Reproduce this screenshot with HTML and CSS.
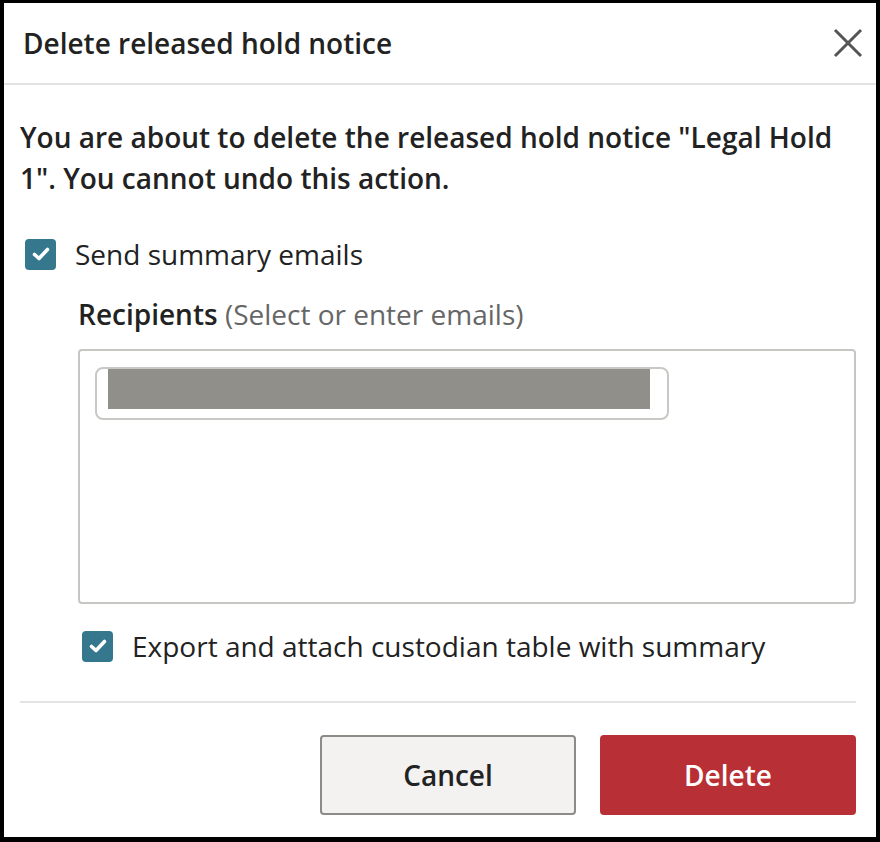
FILE: index.html
```html
<!DOCTYPE html>
<html lang="en">

<head>
    <meta charset="utf-8" />
    <meta name="viewport" content="width=device-width, initial-scale=1.0" />
    <title>Delete released hold notice</title>
    <link rel="stylesheet" href="styles.css">
</head>

<body>
    <div class="dialog">
        <div class="dialog-header">
            <h1 class="dialog-title">Delete released hold notice</h1>
            <button class="close-btn" aria-label="Close">
                <svg width="30" height="30" viewBox="0 0 30 30">
                    <path d="M2 2 L28 28 M28 2 L2 28" stroke="#555" stroke-width="3" fill="none" />
                </svg>
            </button>
        </div>

        <div class="dialog-body">
            <p class="warning">You are about to delete the released hold notice "Legal Hold 1". You cannot undo this action.</p>

            <label class="check-row">
                <span class="checkbox">
                    <svg width="20" height="20" viewBox="0 0 20 20">
                        <path d="M3.5 10.5 L8 14.5 L16.5 5.5" stroke="#fff" stroke-width="3.6" fill="none" stroke-linecap="round" stroke-linejoin="round" />
                    </svg>
                </span>
                Send summary emails
            </label>

            <div class="recipients">
                <div class="field-label"><b>Recipients</b> <span class="hint">(Select or enter emails)</span></div>
                <div class="email-box">
                    <div class="chip"><span class="redacted"></span></div>
                </div>

                <label class="check-row">
                    <span class="checkbox">
                        <svg width="20" height="20" viewBox="0 0 20 20">
                            <path d="M3.5 10.5 L8 14.5 L16.5 5.5" stroke="#fff" stroke-width="3.6" fill="none" stroke-linecap="round" stroke-linejoin="round" />
                        </svg>
                    </span>
                    Export and attach custodian table with summary
                </label>
            </div>
        </div>

        <div class="dialog-footer">
            <button class="btn btn-cancel">Cancel</button>
            <button class="btn btn-delete">Delete</button>
        </div>
    </div>
</body>

</html>
```

FILE: styles.css
```css
html {
    font-family: "Open Sans", "Noto Sans", sans-serif;
    color: #222;
}

body {
    margin: 0;
    background: #000;
    padding: 3px 4px 5px 4px;
    height: 842px;
    box-sizing: border-box;
}

.dialog {
    background: #fff;
    height: 100%;
    display: flex;
    flex-direction: column;
}

.dialog-header {
    display: flex;
    align-items: center;
    justify-content: space-between;
    height: 80px;
    padding: 0 13px 0 19px;
    border-bottom: 2px solid #e3e3e3;
}

.dialog-title {
    margin: 0;
    font-size: 28px;
    font-weight: 600;
    color: #222;
}

.close-btn {
    border: 0;
    background: none;
    padding: 0;
    width: 30px;
    height: 30px;
    cursor: pointer;
}

.dialog-body {
    padding: 0 20px 0 16px;
}

.warning {
    margin: 32px 0 0 0;
    font-size: 28px;
    line-height: 41px;
    font-weight: 600;
    color: #222;
}

.check-row {
    display: flex;
    align-items: center;
    gap: 19px;
    font-size: 28px;
    line-height: 38px;
    color: #222;
    margin-top: 36px;
    padding-left: 5px;
}

.checkbox {
    width: 31px;
    height: 31px;
    border-radius: 4px;
    background: #35788d;
    display: flex;
    align-items: center;
    justify-content: center;
    flex-shrink: 0;
}

.recipients {
    padding-left: 58px;
}

.recipients .check-row {
    margin-top: 23px;
    padding-left: 4px;
}

.field-label {
    font-size: 28px;
    line-height: 38px;
    margin-top: 22px;
}

.field-label b {
    font-weight: 600;
}

.hint {
    color: #666;
}

.email-box {
    margin-top: 16px;
    height: 255px;
    box-sizing: border-box;
    border: 2px solid #c6c6c2;
    border-radius: 4px;
    padding: 16px 15px;
}

.chip {
    width: 574px;
    height: 53px;
    border: 2px solid #c8c8c4;
    border-radius: 8px;
    padding: 0 17px 0 11px;
    box-sizing: border-box;
}

.redacted {
    display: block;
    height: 40px;
    background: #908f8a;
}

.dialog-footer {
    margin: 36px 20px 0 16px;
    padding-top: 32px;
    border-top: 2px solid #e3e3e3;
    display: flex;
    justify-content: flex-end;
    gap: 24px;
}

.btn {
    width: 256px;
    height: 80px;
    border-radius: 4px;
    font-family: "Open Sans", "Noto Sans", sans-serif;
    font-size: 28px;
    font-weight: 600;
    cursor: pointer;
}

.btn-cancel {
    background: #f3f2f0;
    border: 2px solid #8c8b86;
    color: #222;
}

.btn-delete {
    background: #b83035;
    border: 0;
    color: #fff;
}
```
